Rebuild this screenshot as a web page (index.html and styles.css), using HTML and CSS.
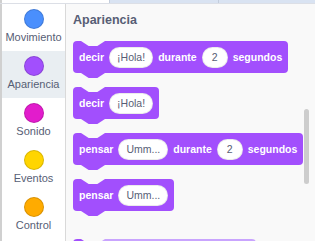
FILE: index.html
```html
<!DOCTYPE html>
<html lang="es">
<head>
    <meta charset="UTF-8">
    <title>Apariencia</title>
    <link rel="stylesheet" href="styles.css">
</head>
<body>
    <div class="tab-strip">
        <div class="tab tab-active"></div>
        <div class="tab tab-costumes"></div>
        <div class="tab tab-sounds"></div>
    </div>

    <div class="workspace">
        <div class="edge"></div>

        <ul class="categories">
            <li class="category">
                <span class="dot dot-motion"></span>
                <span class="category-label">Movimiento</span>
            </li>
            <li class="category selected">
                <span class="dot dot-looks"></span>
                <span class="category-label">Apariencia</span>
            </li>
            <li class="category">
                <span class="dot dot-sound"></span>
                <span class="category-label">Sonido</span>
            </li>
            <li class="category">
                <span class="dot dot-events"></span>
                <span class="category-label">Eventos</span>
            </li>
            <li class="category">
                <span class="dot dot-control"></span>
                <span class="category-label">Control</span>
            </li>
            <li class="category">
                <span class="dot dot-sensing"></span>
            </li>
        </ul>

        <div class="palette">
            <h2 class="palette-title">Apariencia</h2>

            <div class="block">
                <span>decir</span>
                <span class="input">¡Hola!</span>
                <span>durante</span>
                <span class="input">2</span>
                <span>segundos</span>
            </div>

            <div class="block">
                <span>decir</span>
                <span class="input">¡Hola!</span>
            </div>

            <div class="block">
                <span>pensar</span>
                <span class="input">Umm...</span>
                <span>durante</span>
                <span class="input">2</span>
                <span>segundos</span>
            </div>

            <div class="block block-last">
                <span>pensar</span>
                <span class="input">Umm...</span>
            </div>

            <!-- next block, only its top edge is in view -->
            <div class="block block-costume"></div>

            <div class="scrollbar"></div>
        </div>
    </div>
</body>
</html>
```

FILE: styles.css
```css
* {
    box-sizing: border-box;
}

body {
    margin: 0;
    width: 315px;
    height: 241px;
    overflow: hidden;
    font-family: 'Liberation Sans', Arial, sans-serif;
    color: #575e75;
    background: #ffffff;
}

/* Bottom edge of the Code / Costumes / Sounds tabs */
.tab-strip {
    display: flex;
    height: 4px;
    border-bottom: 1px solid #dcdfe6;
    padding-left: 2px;
    background: #d0d0d0;
}

.tab {
    height: 3px;
}

.tab-active {
    width: 107px;
    background: #ffffff;
}

.tab-costumes {
    width: 110px;
    background: #d9e3f2;
    border-left: 1px solid #c3cddc;
    border-right: 1px solid #c3cddc;
}

.tab-sounds {
    flex: 1;
    background: #d9e3f2;
}

.workspace {
    display: flex;
    height: 237px;
}

.edge {
    width: 2px;
    background: #d0d0d0;
}

/* Category menu */
.categories {
    list-style: none;
    margin: 0;
    padding: 0;
    width: 64px;
    background: #ffffff;
    border-right: 1px solid #d9d9d9;
    overflow: hidden;
}

.category {
    height: 47px;
    display: flex;
    flex-direction: column;
    align-items: center;
    padding-top: 5px;
}

.category.selected {
    background: #e9eef2;
}

.dot {
    width: 20px;
    height: 20px;
    border-radius: 50%;
    border: 1px solid rgba(0, 0, 0, 0.15);
    margin-left: 1px;
}

.dot-motion { background: #4a8ffd; }
.dot-looks { background: #a24ffd; }
.dot-sound { background: #e21ccc; }
.dot-events { background: #ffd500; }
.dot-control { background: #ffab00; }
.dot-sensing { background: #2fb4e0; }

.category-label {
    margin-top: 2px;
    font-size: 11px;
    line-height: 13px;
}

/* Block palette */
.palette {
    position: relative;
    flex: 1;
    background: #f9f9f9;
    padding: 8px 0 0 7px;
    display: flex;
    flex-direction: column;
    align-items: flex-start;
    overflow: hidden;
}

.palette-title {
    margin: 0 0 13px;
    font-size: 12.5px;
    line-height: 16px;
    font-weight: bold;
    color: #575e75;
}

.block {
    position: relative;
    display: flex;
    align-items: center;
    gap: 5px;
    flex-shrink: 0;
    height: 32px;
    padding: 0 6px;
    margin-bottom: 14px;
    background: #a24ffd;
    border-radius: 4px;
    color: #ffffff;
    font-size: 10.5px;
    font-weight: bold;
    white-space: nowrap;
}

/* notch on top and tab underneath */
.block::before,
.block::after {
    content: "";
    position: absolute;
    left: 8px;
    width: 24px;
    height: 5px;
    clip-path: polygon(0 0, 100% 0, 68% 100%, 32% 100%);
}

.block::before {
    top: 0;
    background: #f9f9f9;
}

.block::after {
    top: 100%;
    background: #a24ffd;
}

.block-last {
    margin-bottom: 28px;
}

.block-costume {
    width: 183px;
    background: linear-gradient(to right, #a24ffd 29px, #c9a4fe 29px);
}

.input {
    display: flex;
    align-items: center;
    justify-content: center;
    height: 21px;
    min-width: 26px;
    padding: 0 7px;
    background: #ffffff;
    border: 1px solid rgba(0, 0, 0, 0.08);
    border-radius: 11px;
    color: #575e75;
    font-weight: normal;
}

.scrollbar {
    position: absolute;
    top: 105px;
    right: 6px;
    width: 5px;
    height: 75px;
    border-radius: 3px;
    background: #cdcdcd;
}
```
